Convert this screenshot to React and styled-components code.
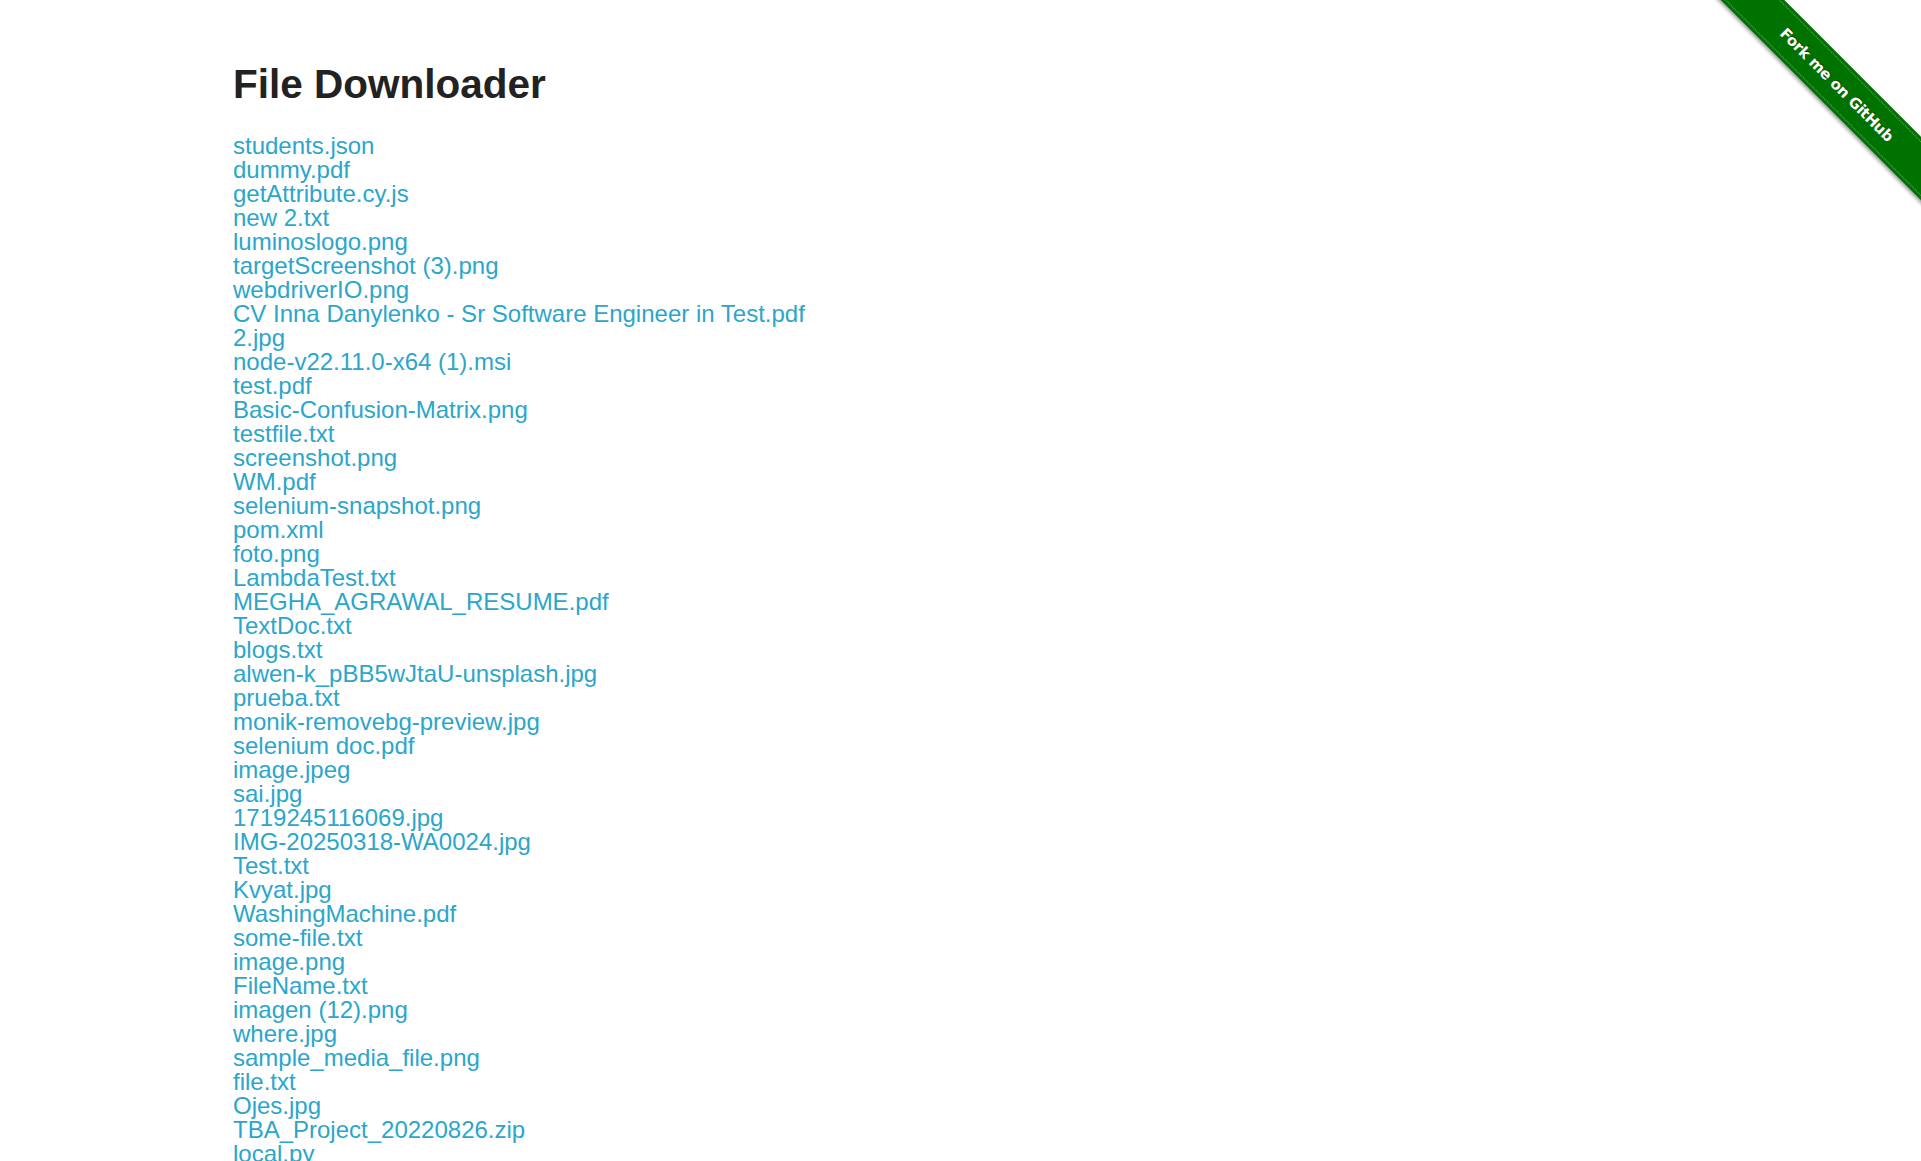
import React from "react";
import styled, { createGlobalStyle } from "styled-components";

const GlobalStyle = createGlobalStyle`
  html, body {
    margin: 0;
    padding: 0;
    background: #ffffff;
    font-family: "Liberation Sans", Arial, Helvetica, sans-serif;
  }
`;

const Page = styled.div`
  position: relative;
  min-height: 1161px;
  overflow: hidden;
`;

const Example = styled.div`
  padding: 61px 0 0 233px;
`;

const Title = styled.h3`
  margin: 0 0 27px;
  font-size: 40.5px;
  font-weight: bold;
  color: #222222;
  line-height: 46px;
`;

const FileList = styled.div`
  display: flex;
  flex-direction: column;
  align-items: flex-start;
`;

const FileLink = styled.a`
  color: #2ba6cb;
  text-decoration: none;
  font-size: 24px;
  line-height: 24px;
  white-space: nowrap;
`;

const RibbonWrap = styled.div`
  position: absolute;
  top: 0;
  right: 0;
  width: 260px;
  height: 260px;
  overflow: hidden;
  pointer-events: none;
`;

const Ribbon = styled.a`
  position: absolute;
  top: 62px;
  right: -66px;
  width: 300px;
  height: 45px;
  transform: rotate(45deg);
  background: #007200;
  box-shadow: 0 2px 4px rgba(0, 0, 0, 0.4);
  display: flex;
  align-items: center;
  justify-content: center;
  pointer-events: auto;
  text-decoration: none;

  &::before,
  &::after {
    content: "";
    position: absolute;
    left: 0;
    right: 0;
    height: 0;
    border-top: 1px dotted rgba(255, 255, 255, 0.4);
  }
  &::before {
    top: 3px;
  }
  &::after {
    bottom: 3px;
  }
`;

const RibbonText = styled.span`
  color: #ffffff;
  font-family: "DejaVu Sans", "Noto Sans", sans-serif;
  font-weight: bold;
  font-size: 15px;
  letter-spacing: -0.3px;
  text-shadow: 0 -1px 0 rgba(0, 0, 0, 0.5);
`;

const files = [
  "students.json",
  "dummy.pdf",
  "getAttribute.cy.js",
  "new 2.txt",
  "luminoslogo.png",
  "targetScreenshot (3).png",
  "webdriverIO.png",
  "CV Inna Danylenko - Sr Software Engineer in Test.pdf",
  "2.jpg",
  "node-v22.11.0-x64 (1).msi",
  "test.pdf",
  "Basic-Confusion-Matrix.png",
  "testfile.txt",
  "screenshot.png",
  "WM.pdf",
  "selenium-snapshot.png",
  "pom.xml",
  "foto.png",
  "LambdaTest.txt",
  "MEGHA_AGRAWAL_RESUME.pdf",
  "TextDoc.txt",
  "blogs.txt",
  "alwen-k_pBB5wJtaU-unsplash.jpg",
  "prueba.txt",
  "monik-removebg-preview.jpg",
  "selenium doc.pdf",
  "image.jpeg",
  "sai.jpg",
  "1719245116069.jpg",
  "IMG-20250318-WA0024.jpg",
  "Test.txt",
  "Kvyat.jpg",
  "WashingMachine.pdf",
  "some-file.txt",
  "image.png",
  "FileName.txt",
  "imagen (12).png",
  "where.jpg",
  "sample_media_file.png",
  "file.txt",
  "Ojes.jpg",
  "TBA_Project_20220826.zip",
  "local.py",
  "upload.txt",
  "example.json",
];

export default function App() {
  return (
    <Page>
      <GlobalStyle />
      <Example>
        <Title>File Downloader</Title>
        <FileList>
          {files.map((name) => (
            <FileLink key={name} href={`download/${name}`}>
              {name}
            </FileLink>
          ))}
        </FileList>
      </Example>
      <RibbonWrap>
        <Ribbon href="https://github.com/tourdedave/the-internet">
          <RibbonText>Fork me on GitHub</RibbonText>
        </Ribbon>
      </RibbonWrap>
    </Page>
  );
}
